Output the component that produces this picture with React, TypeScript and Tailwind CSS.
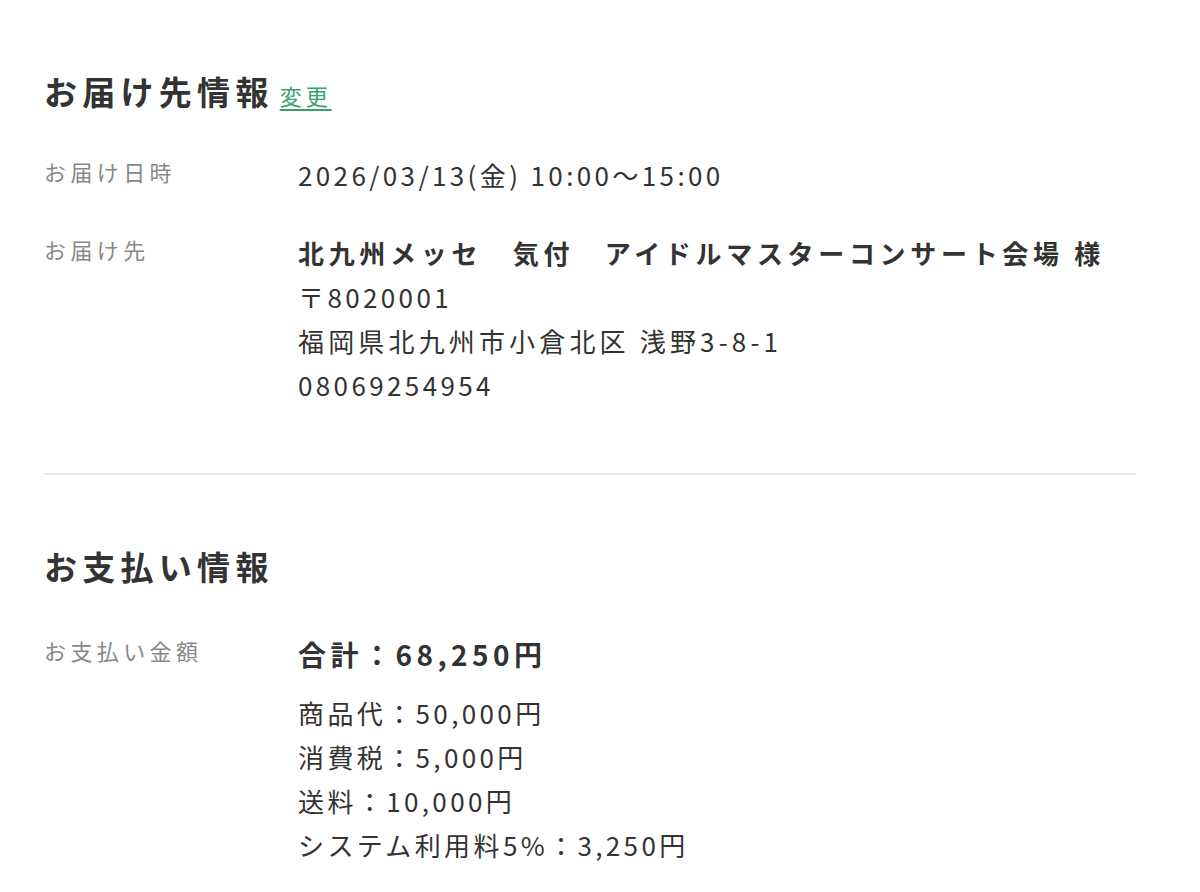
const font = { fontFamily: '"Noto Sans CJK JP", "Noto Sans", sans-serif' };

function Row({ label, children }: { label: string; children: React.ReactNode }) {
  return (
    <div className="flex">
      <div className="w-[254px] shrink-0 text-[22px] leading-[36px] tracking-[0.2em] text-[#888]">{label}</div>
      <div className="flex-1 text-[26px] leading-[44px] tracking-[0.13em] text-[#333]">{children}</div>
    </div>
  );
}

export default function App() {
  return (
    <div className="min-h-screen bg-white pl-[44px] pr-[64px] pt-[67px]" style={font}>
      <section className="pb-[66px]">
        <h2 className="flex items-baseline text-[33px] font-bold leading-[48px] tracking-[0.16em] text-[#333]">
          お届け先情報
          <a href="#" className="ml-[6px] text-[22px] font-normal tracking-[0.18em] text-[#3a9e6e] underline underline-offset-4">
            変更
          </a>
        </h2>
        <div className="mt-[34px] flex flex-col gap-[34px]">
          <Row label="お届け日時">2026/03/13(金) 10:00〜15:00</Row>
          <Row label="お届け先">
            <div className="font-bold tracking-[0.18em]">北九州メッセ　気付　アイドルマスターコンサート会場 様</div>
            <div>〒8020001</div>
            <div className="tracking-[0.16em]">福岡県北九州市小倉北区 浅野3-8-1</div>
            <div>08069254954</div>
          </Row>
        </div>
      </section>
      <hr className="border-t-2 border-[#e8e8e8]" />
      <section className="pt-[67px] pb-[30px]">
        <h2 className="text-[33px] font-bold leading-[48px] tracking-[0.16em] text-[#333]">お支払い情報</h2>
        <div className="mt-[42px]">
          <Row label="お支払い金額">
            <div className="text-[28px] font-bold tracking-[0.16em]">合計：68,250円</div>
            <div className="mt-[15px]">
              <div>商品代：50,000円</div>
              <div>消費税：5,000円</div>
              <div>送料：10,000円</div>
              <div>システム利用料5%：3,250円</div>
            </div>
          </Row>
        </div>
      </section>
    </div>
  );
}
